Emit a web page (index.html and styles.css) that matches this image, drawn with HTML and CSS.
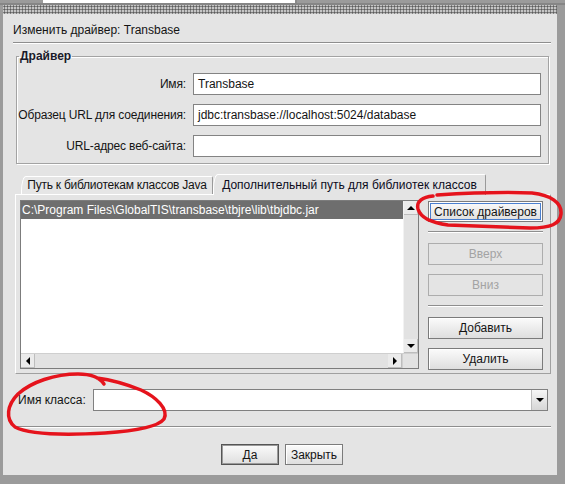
FILE: index.html
```html
<!DOCTYPE html>
<html lang="ru">
<head>
    <meta charset="UTF-8">
    <meta name="viewport" content="width=device-width, initial-scale=1.0">
    <title>Изменить драйвер</title>
    <link rel="stylesheet" href="styles.css">
</head>
<body>
<div class="desk">
    <div class="desk-strip"><div class="desk-window"></div></div>
    <div class="desk-rule"></div>

    <div class="dialog">
        <div class="dialog-grip"></div>
        <div class="dialog-title">Изменить драйвер: Transbase</div>
        <div class="hsep"></div>

        <fieldset class="group">
            <legend>Драйвер</legend>
            <div class="form-grid">
                <label>Имя:</label>
                <div class="field">Transbase</div>
                <label>Образец URL для соединения:</label>
                <div class="field">jdbc:transbase://localhost:5024/database</div>
                <label>URL-адрес веб-сайта:</label>
                <div class="field"></div>
            </div>
        </fieldset>

        <div class="tabs">
            <div class="tab-strip">
                <div class="tab tab-java">Путь к библиотекам классов Java</div>
                <div class="tab tab-extra active">Дополнительный путь для библиотек классов</div>
            </div>
            <div class="tab-panel">
                <div class="scroll-pane">
                    <div class="scroll-main">
                        <div class="viewport">
                            <div class="row selected">C:\Program Files\GlobalTIS\transbase\tbjre\lib\tbjdbc.jar</div>
                        </div>
                        <div class="vbar">
                            <div class="arrow"><span class="tri-up"></span></div>
                            <div class="track"></div>
                            <div class="arrow"><span class="tri-down"></span></div>
                        </div>
                    </div>
                    <div class="hbar-row">
                        <div class="hbar">
                            <div class="arrow"><span class="tri-left"></span></div>
                            <div class="track"></div>
                            <div class="arrow"><span class="tri-right"></span></div>
                        </div>
                        <div class="corner"></div>
                    </div>
                </div>

                <div class="side-buttons">
                    <button class="btn focused">Список драйверов</button>
                    <div class="hsep side-sep"></div>
                    <button class="btn" disabled>Вверх</button>
                    <button class="btn gap" disabled>Вниз</button>
                    <div class="hsep side-sep"></div>
                    <button class="btn">Добавить</button>
                    <button class="btn gap">Удалить</button>
                </div>
            </div>
        </div>

        <div class="class-row">
            <span>Имя класса:</span>
            <div class="combo">
                <div class="combo-text"></div>
                <div class="combo-btn"><span class="tri-down"></span></div>
            </div>
        </div>

        <div class="hsep bottom-sep"></div>

        <div class="actions">
            <button class="btn default">Да</button>
            <button class="btn">Закрыть</button>
        </div>
    </div>

    <!-- пометки маркером поверх окна -->
    <svg class="marks" width="565" height="484" viewBox="0 0 565 484">
        <path d="M437 195 C470 193, 505 192, 532 193 C551 195, 562 203, 561 214 C560 224, 551 228, 530 228 C500 227, 470 226, 448 225 C433 223, 421 219, 418 209 C416 201, 423 197, 433 196"/>
        <path d="M104 384 C100 378, 92 374, 78 374 C55 374, 31 382, 18 394 C7 405, 5 419, 15 427 C30 435, 70 435, 105 433 C135 431, 158 427, 164 419 C169 409, 156 397, 141 390 C126 384, 112 380, 97 378"/>
    </svg>
</div>
</body>
</html>
```

FILE: styles.css
```css
body {
    margin: 0;
    background-color: #9b9b9b;
    font-family: "Liberation Sans", Arial, sans-serif;
    font-size: 12px;
    color: #141414;
}

.desk {
    position: relative;
    width: 565px;
    height: 484px;
    overflow: hidden;
}

/* кусок соседнего окна сверху */
.desk-strip {
    display: flex;
    height: 3px;
}
.desk-window {
    margin-left: 43px;
    width: 252px;
    background-color: #ffffff;
    border-right: 2px solid #8a8a8a;
}
.desk-rule {
    height: 2px;
    background-color: #868686;
}

.dialog {
    margin-left: 3px;
    width: 554px;
    background-color: #e4e4e4;
    padding-bottom: 10px;
}

.dialog-grip {
    height: 9px;
    background-color: #c6c6c6;
    background-image: radial-gradient(circle, #5c5c5c 0.9px, transparent 1.2px);
    background-size: 3px 3px;
}

.dialog-title {
    padding: 8px 0 0 10px;
    height: 20px;
    line-height: 16px;
}

.hsep {
    margin: 0 6px 0 10px;
    border-top: 1px solid #8e8e8e;
    border-bottom: 1px solid #ffffff;
}

/* рамка "Драйвер" */
.group {
    margin: 5px 8px 0 13px;
    padding: 10px 7px 6px 0;
    border: 1px solid #a3a3a3;
    box-shadow: inset 1px 1px 0 #ffffff, 1px 1px 0 #ffffff;
}
.group legend {
    margin-left: 2px;
    padding: 0 1px;
    font-weight: bold;
    line-height: 14px;
    color: #1a1a2a;
}

.form-grid {
    display: grid;
    grid-template-columns: 169px 1fr;
    column-gap: 7px;
    row-gap: 9px;
}
.form-grid label {
    text-align: right;
    line-height: 22px;
    white-space: nowrap;
    letter-spacing: -0.15px;
}
.field {
    height: 20px;
    line-height: 20px;
    padding-left: 4px;
    background-color: #ffffff;
    border: 1px solid #838383;
    white-space: nowrap;
    overflow: hidden;
}

/* вкладки */
.tabs {
    margin: 10px 6px 0 12px;
}
.tab-strip {
    display: flex;
    align-items: flex-end;
    height: 20px;
    padding-left: 6px;
}
.tab {
    height: 17px;
    line-height: 17px;
    text-align: center;
    white-space: nowrap;
    background-color: #e6e6e6;
    border-top: 1px solid #ffffff;
    border-left: 1px solid #ffffff;
    border-right: 1px solid #9a9a9a;
    border-top-left-radius: 5px 15px;
    border-top-right-radius: 2px;
}
.tab-java {
    width: 190px;
    letter-spacing: -0.25px;
}
.tab-extra {
    width: 271px;
}
.tab.active {
    position: relative;
    height: 20px;
    line-height: 20px;
    margin-bottom: -1px;
    background-color: #e4e4e4;
    color: #0c0c1c;
}

.tab-panel {
    display: flex;
    gap: 9px;
    height: 171px;
    padding: 5px 7px 2px 4px;
    border-top: 1px solid #ffffff;
    border-left: 1px solid #ffffff;
    border-right: 1px solid #a0a0a0;
    border-bottom: 1px solid #a0a0a0;
}

.scroll-pane {
    width: 397px;
    height: 167px;
    border: 1px solid #7c7c7c;
    display: flex;
    flex-direction: column;
}
.scroll-main {
    display: flex;
    height: 152px;
}
.viewport {
    flex: 1;
    background-color: #ffffff;
}
.row {
    height: 18px;
    line-height: 18px;
    padding-left: 1px;
    white-space: nowrap;
}
.row.selected {
    background-color: #6e6e6e;
    color: #ffffff;
}

.vbar {
    width: 15px;
    display: flex;
    flex-direction: column;
    background-color: #e2e2e2;
    border-left: 1px solid #f2f2f2;
    box-sizing: border-box;
}
.hbar-row {
    display: flex;
    height: 15px;
}
.hbar {
    flex: 1;
    display: flex;
    background-color: #e2e2e2;
    border-top: 1px solid #cfcfcf;
}
.corner {
    width: 15px;
    background-color: #e2e2e2;
    border-top: 1px solid #cfcfcf;
    border-left: 1px solid #cfcfcf;
}
.track {
    flex: 1;
}
.arrow {
    width: 14px;
    height: 14px;
    display: flex;
    align-items: center;
    justify-content: center;
    background-color: #ebebeb;
    border-right: 1px solid #bdbdbd;
    border-bottom: 1px solid #bdbdbd;
    box-sizing: border-box;
}

.tri-up, .tri-down, .tri-left, .tri-right {
    width: 0;
    height: 0;
}
.tri-up {
    border-left: 4px solid transparent;
    border-right: 4px solid transparent;
    border-bottom: 4px solid #000000;
}
.tri-down {
    border-left: 4px solid transparent;
    border-right: 4px solid transparent;
    border-top: 4px solid #000000;
}
.tri-left {
    border-top: 4px solid transparent;
    border-bottom: 4px solid transparent;
    border-right: 4px solid #000000;
}
.tri-right {
    border-top: 4px solid transparent;
    border-bottom: 4px solid transparent;
    border-left: 4px solid #000000;
}

/* кнопки */
.btn {
    font-family: "Liberation Sans", Arial, sans-serif;
    font-size: 12px;
    color: #141414;
    height: 22px;
    padding: 0;
    background: linear-gradient(#fbfbfb, #dedede);
    border: 1px solid #7b7b7b;
    box-shadow: inset 1px 1px 0 #ffffff;
}
.btn:disabled {
    color: #a3a3a3;
    background: #e4e4e4;
    border-color: #adadad;
    box-shadow: none;
}
.btn.focused {
    box-shadow: inset 0 0 0 1px #ffffff, inset 0 0 0 2px #4a7fcf;
    height: 21px;
}
.btn.default {
    border-color: #555555;
    box-shadow: inset 0 0 0 1px #9a9a9a;
}

.side-buttons {
    width: 115px;
    display: flex;
    flex-direction: column;
    padding-top: 1px;
}
.side-buttons .btn {
    width: 115px;
}
.side-sep {
    margin: 9px 0 10px 0;
}
.gap {
    margin-top: 9px;
}

/* имя класса */
.class-row {
    display: grid;
    grid-template-columns: 75px 1fr;
    align-items: center;
    margin: 15px 9px 0 15px;
}
.combo {
    display: flex;
    height: 20px;
    border: 1px solid #808080;
    background-color: #ffffff;
}
.combo-text {
    flex: 1;
}
.combo-btn {
    width: 15px;
    display: flex;
    align-items: center;
    justify-content: center;
    background: linear-gradient(#f6f6f6, #d6d6d6);
    border-left: 1px solid #bdbdbd;
}

.bottom-sep {
    margin-top: 15px;
}

.actions {
    display: flex;
    justify-content: center;
    gap: 6px;
    margin-top: 16px;
    padding-left: 4px;
}
.actions .btn {
    width: 58px;
    height: 21px;
}

.marks {
    position: absolute;
    left: 0;
    top: 0;
    pointer-events: none;
}
.marks path {
    fill: none;
    stroke: #e5131c;
    stroke-width: 3.5;
    stroke-linecap: round;
    stroke-linejoin: round;
}
```
